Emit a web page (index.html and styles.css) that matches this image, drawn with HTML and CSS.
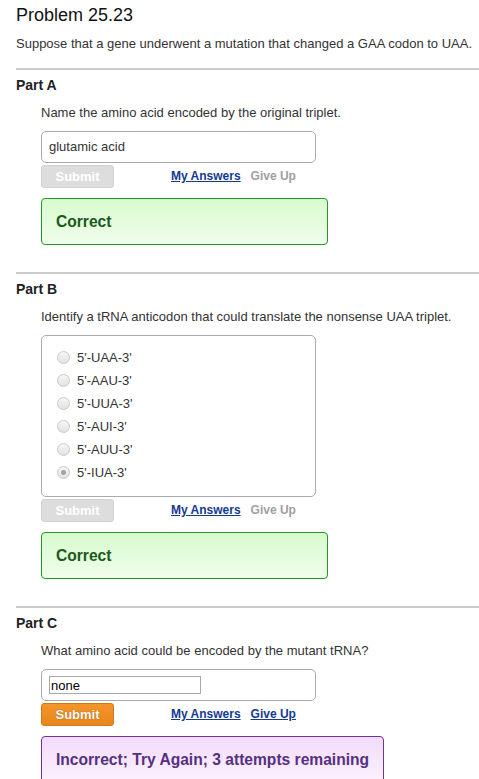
FILE: index.html
```html
<!DOCTYPE html>
<html lang="en">
<head>
<meta charset="utf-8">
<title>Problem 25.23</title>
<link rel="stylesheet" href="styles.css">
</head>
<body>
<div class="page">
  <h1 class="title">Problem 25.23</h1>
  <p class="intro">Suppose that a gene underwent a mutation that changed a GAA codon to UAA.</p>

  <section class="part">
    <h2 class="part-title">Part A</h2>
    <div class="part-body">
      <p class="prompt">Name the amino acid encoded by the original triplet.</p>
      <div class="answer-box answer-text">glutamic acid</div>
      <div class="actions">
        <button class="submit" type="button" disabled>Submit</button>
        <a class="link link-first" href="#">My Answers</a>
        <span class="link link-disabled">Give Up</span>
      </div>
      <div class="feedback feedback-correct">Correct</div>
    </div>
  </section>

  <section class="part">
    <h2 class="part-title">Part B</h2>
    <div class="part-body">
      <p class="prompt">Identify a tRNA anticodon that could translate the nonsense UAA triplet.</p>
      <ul class="answer-box choices">
        <li class="choice"><input class="radio" type="radio" name="b" disabled><span>5'-UAA-3'</span></li>
        <li class="choice"><input class="radio" type="radio" name="b" disabled><span>5'-AAU-3'</span></li>
        <li class="choice"><input class="radio" type="radio" name="b" disabled><span>5'-UUA-3'</span></li>
        <li class="choice"><input class="radio" type="radio" name="b" disabled><span>5'-AUI-3'</span></li>
        <li class="choice"><input class="radio" type="radio" name="b" disabled><span>5'-AUU-3'</span></li>
        <li class="choice"><input class="radio" type="radio" name="b" disabled checked><span>5'-IUA-3'</span></li>
      </ul>
      <div class="actions">
        <button class="submit" type="button" disabled>Submit</button>
        <a class="link link-first" href="#">My Answers</a>
        <span class="link link-disabled">Give Up</span>
      </div>
      <div class="feedback feedback-correct">Correct</div>
    </div>
  </section>

  <section class="part">
    <h2 class="part-title">Part C</h2>
    <div class="part-body">
      <p class="prompt">What amino acid could be encoded by the mutant tRNA?</p>
      <div class="answer-box answer-input-box">
        <input class="text-input" type="text" value="none">
      </div>
      <div class="actions">
        <button class="submit submit-active" type="button">Submit</button>
        <a class="link link-first" href="#">My Answers</a>
        <a class="link" href="#">Give Up</a>
      </div>
      <div class="feedback feedback-incorrect">Incorrect; Try Again; 3 attempts remaining</div>
    </div>
  </section>
</div>
</body>
</html>
```

FILE: styles.css
```css
html, body {
  margin: 0;
  padding: 0;
  background: #fff;
}

body {
  font-family: "Liberation Sans", Arial, sans-serif;
  color: #333;
}

.page {
  padding: 4px 0 0 16px;
}

.title {
  margin: 0;
  font-size: 18px;
  font-weight: normal;
  line-height: 22px;
  color: #111;
}

.intro {
  margin: 10px 0 0;
  font-size: 13px;
  line-height: 16px;
  color: #333;
}

.part {
  margin-top: 16px;
  border-top: 2px solid #cccccc;
  padding-top: 7px;
}

.part + .part {
  margin-top: 27px;
}

.part-title {
  margin: 0;
  font-size: 14px;
  font-weight: bold;
  line-height: 17px;
  color: #222;
}

.part-body {
  padding-left: 25px;
}

.prompt {
  margin: 11px 0 0;
  font-size: 13px;
  line-height: 16px;
  color: #333;
}

.answer-box {
  box-sizing: border-box;
  width: 275px;
  margin: 10px 0 0;
  border: 1px solid #aaaaaa;
  border-radius: 5px;
  background: #fff;
}

.answer-text {
  padding: 7px 7px;
  font-size: 13px;
  line-height: 16px;
  color: #333;
}

.answer-input-box {
  padding: 6px 7px;
  line-height: 0;
}

.text-input {
  box-sizing: border-box;
  width: 152px;
  height: 18px;
  margin: 0;
  padding: 0 1px;
  border: 1px solid #a9a9a9;
  border-radius: 0;
  font-family: "Liberation Sans", Arial, sans-serif;
  font-size: 13px;
  color: #000;
  background: #fff;
  outline: none;
}

.choices {
  list-style: none;
  padding: 10px 15px 12px;
}

.choice {
  display: flex;
  align-items: center;
  gap: 7px;
  height: 23px;
  font-size: 13px;
  color: #333;
}

.radio {
  appearance: none;
  -webkit-appearance: none;
  box-sizing: border-box;
  width: 13px;
  height: 13px;
  margin: 0;
  border: 1px solid #c9c9c9;
  border-radius: 50%;
  background: linear-gradient(#f6f6f6, #e2e2e2);
}

.radio:checked {
  background: radial-gradient(circle, #a3a3a3 0, #a3a3a3 2px, rgba(163,163,163,0) 3px), linear-gradient(#f6f6f6, #e2e2e2);
}

.actions {
  display: flex;
  align-items: center;
  margin-top: 2px;
  height: 23px;
}

.submit {
  box-sizing: border-box;
  width: 73px;
  height: 23px;
  margin: 0;
  padding: 0;
  border: 1px solid #d2d2d2;
  border-radius: 3px;
  background: #dddddd;
  color: #fff;
  font-family: "Liberation Sans", Arial, sans-serif;
  font-size: 13px;
  font-weight: bold;
  line-height: 21px;
}

.submit-active {
  border-color: #d27814;
  background: linear-gradient(#f2952a, #e9861c);
  text-shadow: 0 0 1px rgba(110, 50, 0, 0.7);
}

.link {
  font-size: 12px;
  font-weight: bold;
  line-height: 15px;
  color: #15398f;
  text-decoration: underline;
  margin-left: 10px;
}

.link-first {
  margin-left: 57px;
}

.link-disabled {
  color: #a0a0a0;
  text-decoration: none;
}

.feedback {
  box-sizing: border-box;
  width: fit-content;
  min-width: 287px;
  height: 47px;
  margin-top: 10px;
  padding: 0 14px;
  border: 1px solid;
  border-radius: 4px;
  font-size: 15.6px;
  font-weight: bold;
  line-height: 45px;
  white-space: nowrap;
}

.feedback-correct {
  border-color: #1f9a1f;
  background: linear-gradient(#d7fbcd, #f0fdec);
  color: #1a5a1a;
}

.feedback-incorrect {
  border-color: #6e3590;
  background: linear-gradient(#f1dbfa, #fcf2ff);
  color: #56307f;
}
```
